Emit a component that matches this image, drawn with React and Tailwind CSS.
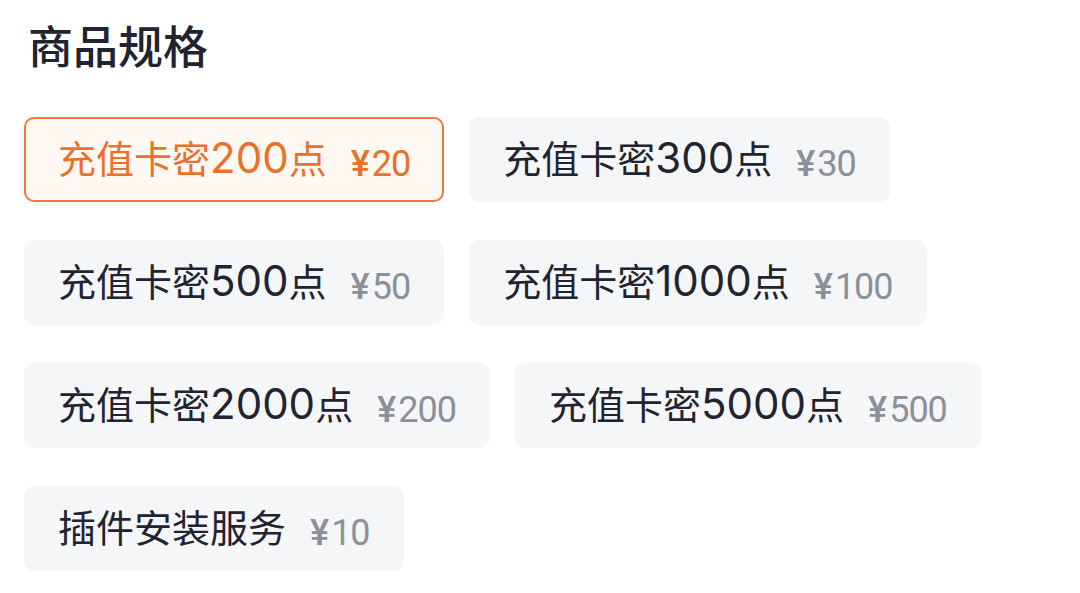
import React from "react";

const items = [
  { label: "充值卡密200点", price: "20", selected: true },
  { label: "充值卡密300点", price: "30" },
  { label: "充值卡密500点", price: "50" },
  { label: "充值卡密1000点", price: "100" },
  { label: "充值卡密2000点", price: "200" },
  { label: "充值卡密5000点", price: "500" },
  { label: "插件安装服务", price: "10" },
];

function Label({ text }) {
  const parts = text.split(/(\d+)/).filter(Boolean);
  return (
    <span>
      {parts.map((p, i) =>
        /^\d+$/.test(p) ? (
          <span key={i} className="font-['Inter',sans-serif] text-[42px]">
            {p}
          </span>
        ) : (
          <span key={i}>{p}</span>
        )
      )}
    </span>
  );
}

function Price({ value, color }) {
  return (
    <span className={"ml-[24px] align-[-3px] font-['Roboto',sans-serif] " + color}>
      <span className="text-[36px] mr-[2px] font-medium">¥</span>
      <span className="text-[36px] tracking-[-1px]">{value}</span>
    </span>
  );
}

export default function App() {
  return (
    <div className="min-h-[593px] w-[1080px] bg-white font-['Noto_Sans_CJK_SC','Noto_Sans',sans-serif] text-[#1f2430]">
      <div className="pl-[28px] pt-[22px]">
        <h1 className="text-[45px] leading-none font-medium text-[#1f2430]">商品规格</h1>
      </div>
      <div className="mt-[50px] flex w-[1032px] flex-wrap gap-x-[25px] gap-y-[38px] pl-[24px]">
        {items.map((it) =>
          it.selected ? (
            <div
              key={it.label}
              className="flex h-[85px] items-center rounded-[10px] border-2 border-[#ea7a35] bg-[#fff8f3] px-[32px] text-[#e8722a]"
            >
              <span className="whitespace-nowrap text-[38px] leading-none">
                <Label text={it.label} />
                <Price value={it.price} color="text-[#e8722a]" />
              </span>
            </div>
          ) : (
            <div
              key={it.label}
              className="flex h-[85px] items-center rounded-[10px] bg-[#f5f6f8] px-[34px]"
            >
              <span className="whitespace-nowrap text-[38px] leading-none">
                <Label text={it.label} />
                <Price value={it.price} color="text-[#8b909b]" />
              </span>
            </div>
          )
        )}
      </div>
    </div>
  );
}
